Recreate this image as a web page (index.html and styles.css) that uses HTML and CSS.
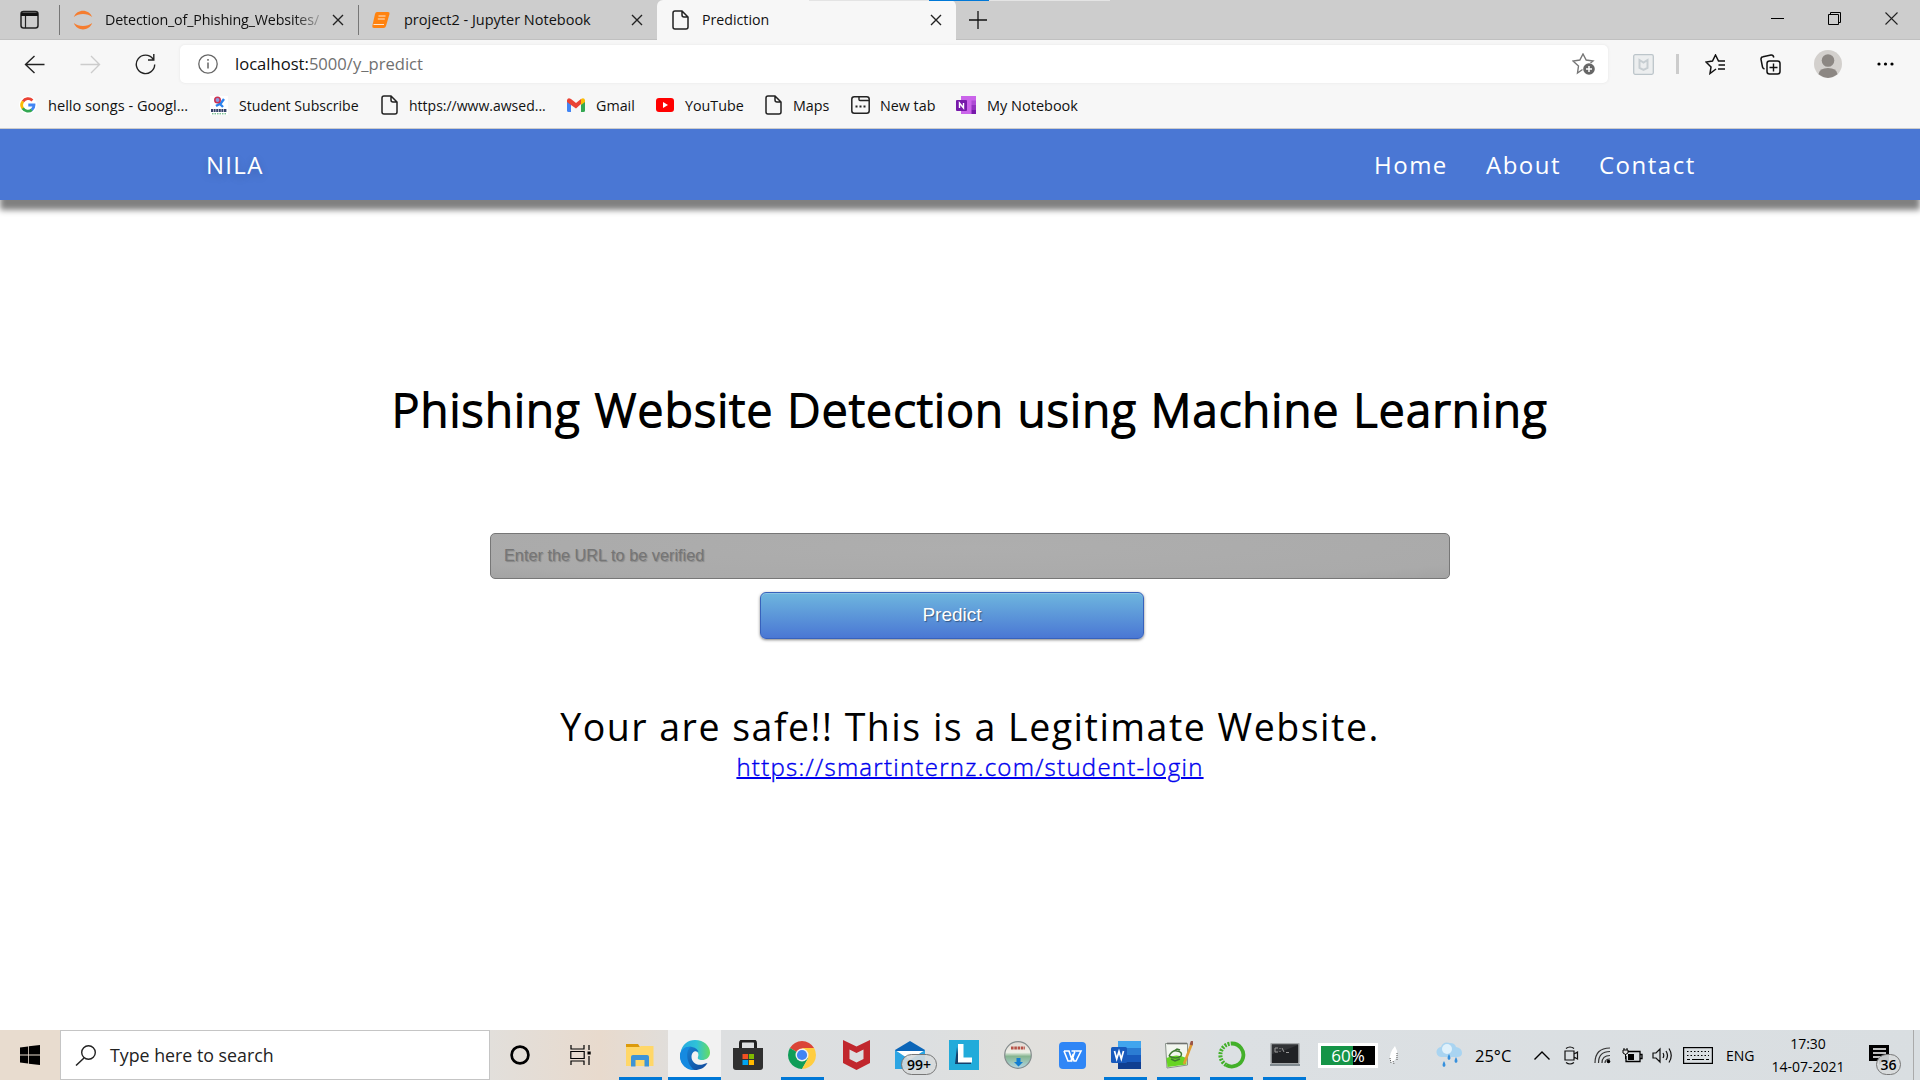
FILE: index.html
```html
<!DOCTYPE html>
<html lang="en">
<head>
<meta charset="utf-8">
<title>Prediction</title>
<link rel="stylesheet" href="styles.css">
</head>
<body>
<svg class="defs" width="0" height="0">
  <symbol id="x" viewBox="0 0 12 12"><path d="M1 1l10 10M11 1L1 11" fill="none" stroke="#222" stroke-width="1.4"/></symbol>
  <symbol id="page" viewBox="0 0 17 20"><path d="M3 1h7l6 6v10q0 2-2 2H3q-2 0-2-2V3q0-2 2-2zM10 1v4q0 2 2 2h4" fill="none" stroke="#222" stroke-width="1.5"/></symbol>
</svg>
<div class="tabs">
  <div class="tabmenu"><svg width="19" height="19" viewBox="0 0 19 19"><rect x="1" y="1.5" width="17" height="16.5" rx="2.500" fill="none" stroke="#222" stroke-width="1.500"/><path d="M1 2.500h17V6H1z" fill="#111"/><path d="M5.500 6v12" stroke="#222" stroke-width="1.200"/></svg></div>
  <div class="tab tab-one">
    <svg width="20" height="20" viewBox="0 0 20 20"><path d="M.8 7C4-1.500 16-1.500 19.200 7C14.500 3 5.500 3 .8 7zM.8 13C4 21.500 16 21.500 19.200 13C14.500 17 5.500 17 .8 13z" fill="#f57d30"/></svg>
    <span class="t t-det">Detection_of_Phishing_Websites/</span>
    <svg class="close" width="12" height="12"><use href="#x"/></svg>
  </div>
  <div class="tab tab-two">
    <svg width="18" height="16" viewBox="0 0 18 16"><path d="M5 0h11q2 0 1.500 2L14 14q-.5 2-2.500 2H2q-2 0-1.700-2L3 2q.5-2 2-2z" fill="#ff8310"/><path d="M6.500 4h7M5.800 7h7M1.500 12.500h10.500" stroke="#fff" stroke-width="1.100" opacity=".8"/></svg>
    <span class="t t-proj">project2 - Jupyter Notebook</span>
    <svg class="close" width="12" height="12"><use href="#x"/></svg>
  </div>
  <div class="tab active">
    <svg width="17" height="20"><use href="#page"/></svg>
    <span class="t t-pred">Prediction</span>
    <svg class="close" width="12" height="12"><use href="#x"/></svg>
  </div>
  <svg class="plus" width="18" height="18" viewBox="0 0 18 18"><path d="M9 0v18M0 9h18" stroke="#111" stroke-width="1.300"/></svg>
  <div class="winctl">
    <svg width="13" height="13" viewBox="0 0 13 13"><path d="M0 6.500h13" stroke="#000"/></svg>
    <svg width="13" height="13" viewBox="0 0 13 13"><path d="M.5 2.500h10v10H.5zM2.500 2.500v-2h10v10h-2" fill="none" stroke="#000"/></svg>
    <svg width="13" height="13" viewBox="0 0 13 13"><path d="M.5.5l12 12M12.500.5l-12 12" stroke="#222" stroke-width="1.100"/></svg>
  </div>
  <div class="sharebar"><i></i></div>
</div>
<div class="toolbar">
  <svg class="back" width="21" height="19" viewBox="0 0 21 19"><path d="M20.500 9.500H1.500M10.500 1L1.500 9.500L10.500 18" fill="none" stroke="#222" stroke-width="1.400"/></svg>
  <svg class="fwd" width="21" height="19" viewBox="0 0 21 19"><path d="M.5 9.500h19M11 1l8.500 8.500L11 18" fill="none" stroke="#ccc" stroke-width="1.400"/></svg>
  <svg class="reload" width="21" height="21" viewBox="0 0 21 21"><path d="M18 5A9.200 9.200 0 1 0 19.700 10.500M18.800 0v6H13" fill="none" stroke="#222" stroke-width="1.400"/></svg>
  <div class="address">
    <svg width="20" height="20" viewBox="0 0 20 20"><circle cx="10" cy="10" r="9.200" fill="none" stroke="#666" stroke-width="1.300"/><path d="M10 8.500v6M10 5v1.800" stroke="#666" stroke-width="1.500"/></svg>
    <span class="url">localhost:<em>5000/y_predict</em></span>
    <svg class="fav" width="24" height="22" viewBox="0 0 24 22"><path d="M10.500 16.500l-5 3.500L6.500 13 1 8l6.800-1L11 1l3.200 6 6.800 1-2.500 2" fill="none" stroke="#777" stroke-width="1.400"/><circle cx="17" cy="16" r="5.800" fill="#666"/><path d="M17 13v6M14 16h6" stroke="#fff" stroke-width="1.500"/></svg>
  </div>
  <svg class="mcs" width="21" height="21" viewBox="0 0 21 21"><rect x=".7" y=".7" width="19.600" height="19.600" rx="1.500" fill="#eceeef" stroke="#bcc5ca" stroke-width="1.300"/><path d="M6.500 6l4 2.500L14.500 6v8l-4 2-4-2z" fill="none" stroke="#c7ced2" stroke-width="2"/></svg>
  <i class="sep"></i>
  <svg class="favs" width="21" height="21" viewBox="0 0 21 21"><path d="M11 15l-6 4.500L6 13 1 8l6.500-1L10.500 1l3 6H20M13.500 11H20M13 15h7" fill="none" stroke="#111" stroke-width="1.500"/></svg>
  <svg class="coll" width="21" height="21" viewBox="0 0 21 21"><path d="M4.500 15Q2.800 14.500 2.500 13L1 5.500Q.8 3 3 2.700L11 1q2.300-.3 2.800 2.500" fill="none" stroke="#111" stroke-width="1.500"/><rect x="7" y="7" width="13" height="13" rx="2.500" fill="none" stroke="#111" stroke-width="1.500"/><path d="M13.500 9.500v8M9.500 13.500h8" stroke="#111" stroke-width="1.400"/></svg>
  <svg class="avatar" width="28" height="28" viewBox="0 0 28 28"><circle cx="14" cy="14" r="14" fill="#d3d0cd"/><circle cx="14" cy="10.500" r="6.300" fill="#8c8783"/><path d="M4.500 24.300Q5.500 18 14 18t9.500 6.300Q14 31.500 4.500 24.300z" fill="#8c8783"/></svg>
  <svg class="dots" width="17" height="4" viewBox="0 0 17 4"><circle cx="2" cy="2" r="1.600"/><circle cx="8.500" cy="2" r="1.600"/><circle cx="15" cy="2" r="1.600"/></svg>
</div>
<div class="bookmarks">
  <div class="bm b1"><svg width="18" height="18" viewBox="0 0 18 18"><circle cx="9" cy="9" r="9" fill="#fff"/><g fill="none" stroke-width="2.800"><path d="M4 5.500A6 6 0 0 1 13.400 4.500" stroke="#ea4335"/><path d="M4 5.300A6 6 0 0 0 4 12.600" stroke="#fbbc05"/><path d="M3.800 12.300A6 6 0 0 0 13 13.600" stroke="#34a853"/><path d="M12.800 13.800A6 6 0 0 0 15 9H9.300" stroke="#4285f4"/></g></svg><span class="t t-hello">hello songs - Googl...</span></div>
  <div class="bm b2"><svg width="18" height="19" viewBox="0 0 18 19"><path d="M0 0h18v19H0z" fill="#fff"/><path d="M6 10l5-3 3-4M10 8l3 3" stroke="#2b82ed" stroke-width="2.400" fill="none"/><circle cx="7.500" cy="4" r="2.700" fill="#8d9be0" stroke="#cc3352" stroke-width="1.600"/><path d="M1 14.500h16" stroke="#344069" stroke-width="3" stroke-dasharray="2 .6"/><path d="M2 17.800h14" stroke="#45a569" stroke-dasharray="1.500 1"/></svg><span class="t t-stud">Student Subscribe</span></div>
  <div class="bm b3"><svg width="17" height="20"><use href="#page"/></svg><span class="t t-aws">https://www.awsed...</span></div>
  <div class="bm b4"><svg width="18" height="14" viewBox="0 0 18 14"><path d="M0 2h4v12H1.500Q0 14 0 12.500z" fill="#4285f4"/><path d="M14 2h4v10.500q0 1.500-1.500 1.500H14z" fill="#34a853"/><path d="M0 2q1-3 4-1l5 4 5-4v5L9 10.500 4 7 0 4z" fill="#ea4335"/><path d="M14 1q3-2 4 1v2l-4 3z" fill="#fbbc04"/></svg><span class="t t-gm">Gmail</span></div>
  <div class="bm b5"><svg width="18" height="14" viewBox="0 0 18 14"><rect width="18" height="14" rx="3" fill="#f00"/><path d="M7 4l5 3-5 3z" fill="#fff"/></svg><span class="t t-yt">YouTube</span></div>
  <div class="bm b6"><svg width="17" height="20"><use href="#page"/></svg><span class="t t-map">Maps</span></div>
  <div class="bm b7"><svg width="19" height="18" viewBox="0 0 19 18"><rect x=".8" y=".8" width="17.400" height="16.400" rx="2.500" fill="none" stroke="#222" stroke-width="1.500"/><path d="M8 1v2.500q0 1 1 1h9" fill="none" stroke="#222" stroke-width="1.400"/><path d="M4.500 10.500h2M8.500 10.500h2M12.500 10.500h2" stroke="#222" stroke-width="2"/></svg><span class="t t-nt">New tab</span></div>
  <div class="bm b8"><svg width="20" height="18" viewBox="0 0 20 18"><path d="M5 0h15v18H5z" fill="#ca64ea"/><path d="M15.500 4.500H20V9h-4.500z" fill="#ae4bd5"/><path d="M15.500 9H20v4.500h-4.500z" fill="#9332bf"/><path d="M15.500 13.500H20V18h-4.500z" fill="#7719aa"/><rect y="4" width="11" height="11" rx="1" fill="#7719aa"/><path d="M3.500 12V7l4 5V7" fill="none" stroke="#fff" stroke-width="1.400"/></svg><span class="t t-my">My Notebook</span></div>
</div>
<header class="nav">
  <span class="brand t">NILA</span>
  <nav><a class="t t-home">Home</a><a class="t t-about">About</a><a class="t t-contact">Contact</a></nav>
</header>
<main>
  <h1><span class="t t-h1">Phishing Website Detection using Machine Learning</span></h1>
  <form>
    <div class="field"><span class="t t-ph">Enter the URL to be verified</span></div>
    <div class="btn"><span class="t t-btn">Predict</span></div>
  </form>
  <p class="msg"><span class="t t-msg">Your are safe!! This is a Legitimate Website.</span></p>
  <p class="link"><a class="t t-link">https://smartinternz.com/student-login</a></p>
</main>
<footer class="taskbar">
  <div class="start"><svg width="20" height="20" viewBox="0 0 20 20"><path d="M0 2.500L8 1.400V9.500H0zM8.800 1.300L20 0V9.500H8.800zM0 10.400h8v8.200L0 17.500zM8.800 10.400H20V20L8.800 18.700z"/></svg></div>
  <div class="search"><svg width="22" height="21" viewBox="0 0 22 21"><circle cx="13.500" cy="7.500" r="6.800" fill="none" stroke="#222" stroke-width="1.400"/><path d="M9 13L1 20.500" stroke="#222" stroke-width="1.500"/></svg><span class="t t-search">Type here to search</span></div>
  <div class="app wide"><svg width="20" height="20" viewBox="0 0 20 20"><circle cx="10" cy="10" r="8.400" fill="none" stroke="#000" stroke-width="2.700"/></svg></div>
  <div class="app wide"><svg width="21" height="20" viewBox="0 0 21 20"><path d="M1 0v4h13V0M.8 6.500h13.400v7H.8zM1 20v-4h13v4M19 0v5M19 11v9" fill="none" stroke="#000" stroke-width="1.200"/><path d="M17.500 6.500h3.200v3h-3.200z"/></svg></div>
  <div class="app explorer run"><svg width="28" height="24" viewBox="0 0 28 24"><path d="M0 1h12l2 3H0z" fill="#dc9a0c"/><path d="M0 4h13l2-1h12.500v20H0z" fill="#ffd768"/><path d="M5 23.500V14q0-2 2-2h14q2 0 2 2v9.500h-4.500V17h-9v6.500z" fill="#3d94d6"/></svg></div>
  <div class="app edge run"><svg width="30" height="30" viewBox="0 0 30 30"><defs><linearGradient id="eg"><stop offset="0" stop-color="#27a9e1"/><stop offset=".55" stop-color="#2fc2d8"/><stop offset="1" stop-color="#66dc61"/></linearGradient><linearGradient id="eb" x2="1" y2="1"><stop stop-color="#1888d8"/><stop offset="1" stop-color="#12489a"/></linearGradient></defs><path d="M.5 13C2 4 8 0 15 0c9 0 15 6 15 12.500 0 5-4 7.500-8 7.500-3 0-5-1-4-3 1.500-4-1-6.500-5-6.500C7 10.500 3 14 .5 17z" fill="url(#eg)"/><path d="M0 15c1-5 6-9 12-8 4 .8 6 3 6.500 5-3-2-7-.5-7 5 0 5 5 9 11 7.500 2-.5 4-1.500 5-1.500C24.500 28 20 30 15 30 7 30 0 24 0 15z" fill="url(#eb)"/><path d="M0 15C1 9 6 6 11 7 6 9 5 22 14 30 6 30-.5 24 0 15z" fill="#168ae0"/></svg></div>
  <div class="app store"><svg width="30" height="30" viewBox="0 0 30 30"><path d="M7.500 10V3q0-2 2-2h11q2 0 2 2v7" fill="none" stroke="#222" stroke-width="3"/><path d="M0 8h30v19q0 3-3 3H3q-3 0-3-3z" fill="#303030"/><path d="M9.500 14H15v5H9.500z" fill="#f25022"/><path d="M15.800 14H21v5h-5.200z" fill="#7fba00"/><path d="M9.500 20H15v5H9.500z" fill="#00a4ef"/><path d="M15.800 20H21v5h-5.200z" fill="#ffb900"/></svg></div>
  <div class="app chrome run"><svg width="28" height="28" viewBox="0 0 28 28"><path d="M14 14L1.900 7A14 14 0 0 1 26.100 7z" fill="#db4437"/><path d="M14 14L1.900 7A14 14 0 0 0 14 28l6-10.500z" fill="#0f9d58"/><path d="M14 7h12.100A14 14 0 0 1 14 28l6-10.500z" fill="#ffcd40"/><circle cx="14" cy="14" r="6.500" fill="#f1f1f1"/><circle cx="14" cy="14" r="5.100" fill="#4285f4"/></svg></div>
  <div class="app"><svg width="27" height="30" viewBox="0 0 27 30"><path d="M0 0l13.500 6.500L27 0v23l-13.500 7L0 23zM6.500 9.500v9.500l7 3.500 7-3.500V9.500l-7 3.500z" fill="#c1272d" fill-rule="evenodd"/></svg></div>
  <div class="app mail"><svg width="30" height="28" viewBox="0 0 30 28"><path d="M0 9L15 0l15 9v4H0z" fill="#0b65b8"/><path d="M0 10h30L15 18z" fill="#fff"/><path d="M0 9l15 10L30 9v19H0z" fill="#2ca5e3"/></svg><b class="badge b99"><span>99+</span></b></div>
  <div class="app"><svg width="30" height="30" viewBox="0 0 30 30"><path d="M0 0h30v30H0z" fill="#22abda"/><path d="M8 7L6 24h16v-2H10z" fill="#15406c"/><path d="M9 4h5.500v13.500H23v5H9z" fill="#fff"/></svg></div>
  <div class="app"><svg width="28" height="28" viewBox="0 0 28 28"><defs><linearGradient id="dg" x2="0" y2="1"><stop stop-color="#e2d8d2"/><stop offset=".4" stop-color="#eef0e8"/><stop offset=".55" stop-color="#86b590"/><stop offset="1" stop-color="#b3d6e5"/></linearGradient></defs><circle cx="14" cy="14" r="13.300" fill="url(#dg)" stroke="#858d8e" stroke-width="1.200"/><path d="M7 7h14" stroke="#b65348" stroke-width="3" stroke-dasharray="2.600 .7"/><path d="M12.500 17h4v4h2.500l-4.500 4.500L10 21h2.500z" fill="#127dd1"/></svg></div>
  <div class="app"><svg width="27" height="27" viewBox="0 0 27 27"><rect width="27" height="27" rx="4" fill="#2f86f6"/><path d="M5 9h5l3 9 3-9h-3.500M5 9l4 10h3l1.500-5L15 19h2l5-10h-5" fill="none" stroke="#fff" stroke-width="1.600"/></svg></div>
  <div class="app word run"><svg width="30" height="28" viewBox="0 0 30 28"><path d="M7 0h23v7H7z" fill="#41a5ee"/><path d="M7 7h23v7H7z" fill="#2b7cd3"/><path d="M7 14h23v7H7z" fill="#185abd"/><path d="M7 21h23v7H7z" fill="#103f91"/><rect y="6" width="16" height="16" rx="1.500" fill="#185abd"/><path d="M3.500 10l2.200 8L8 10.500l2.300 7.500 2.200-8" fill="none" stroke="#fff" stroke-width="1.700"/></svg></div>
  <div class="app npp run"><svg width="28" height="28" viewBox="0 0 28 28"><path d="M.5 2.500h22V24L2 27z" fill="#f2f6ef" stroke="#89928a"/><path d="M1.500 17q10-5 20 0v6.500L2.500 26z" fill="#67d423"/><path d="M2.500 2.500h19" stroke="#555" stroke-width="2" stroke-dasharray="1 1"/><path d="M4 15q3-6 8-5 6 1 4 5-5 4-12 0M9 10l3-2 3 1M6 18l4 2 5-2" fill="none" stroke="#3f7a30" stroke-width="1.500"/><path d="M27 2L19 23" stroke="#e19d31" stroke-width="2.600"/><path d="M27.500 0l-1.500 4" stroke="#9a5548" stroke-width="3"/></svg></div>
  <div class="app ana run"><svg width="28" height="28" viewBox="0 0 28 28"><path d="M14 2.500A11.500 11.500 0 1 1 8.200 24" fill="none" stroke="#43b02a" stroke-width="3.800"/><path d="M8.200 24A11.500 11.500 0 0 1 14 2.500" fill="none" stroke="#43b02a" stroke-width="4" stroke-dasharray="2 1.200"/></svg></div>
  <div class="app cmd run"><svg width="30" height="24" viewBox="0 0 30 24"><rect x="1" y=".5" width="28" height="20" rx="1" fill="#323437" stroke="#a4a8aa" stroke-width="1.500"/><path d="M0 21h30v2H0z" fill="#818b91"/><path d="M2 11Q15 8 28 2v18H2z" fill="#202225"/><path d="M8 5H5v4h3M10 5v1M10 8v1M12 5l2 4M16 9.500h3" fill="none" stroke="#999"/></svg></div>
  <div class="batt"><span class="t">60%</span></div>
  <svg class="feather" width="10" height="20" viewBox="0 0 10 20"><path d="M6 1Q0 8 1 15l2 3q6-5 5-12z" fill="#fff"/><path d="M1 13l1 5M8 8v8M4 16l1 3" stroke="#555" stroke-dasharray="1 1"/></svg>
  <svg class="weather" width="27" height="26" viewBox="0 0 27 26"><path d="M6 15a5 5 0 0 1-1-10Q7-1 14 1q5 0 6 4 6 1 6 6 0 4-5 4z" fill="#a9d4f1"/><circle cx="11" cy="7" r="5" fill="#e0f1fb"/><path d="M13 12q-3 5 0 6 3-1 0-6zM20 15q-3 5 0 6 3-1 0-6zM8 19q-3 5 0 6 3-1 0-6z" fill="#3690dd"/></svg>
  <span class="t t-temp">25°C</span>
  <svg class="tr chev" width="16" height="9" viewBox="0 0 16 9"><path d="M.5 8.500L8 1l7.500 7.500" fill="none" stroke="#000" stroke-width="1.400"/></svg>
  <svg class="tr meet" width="15" height="19" viewBox="0 0 15 19"><path d="M1 5h9v9H1zM10 8l3.500-2v7L10 11M2 2.500Q6-.5 10 2.500M2 16.500Q6 19.500 10 16.500" fill="none" stroke="#111" stroke-width="1.200"/></svg>
  <svg class="tr wifi" width="17" height="17" viewBox="0 0 17 17"><path d="M1 16Q1 1 16 1M4.500 16Q4.500 4.500 16 4.500M8 16Q8 8.500 16 8.500M11 16Q11 12 16 12" fill="none" stroke="#333" stroke-width="1.200"/><circle cx="14.500" cy="14.500" r="1.800"/></svg>
  <svg class="tr bat" width="21" height="15" viewBox="0 0 21 15"><path d="M5 3.500h13v10H4V8M18 6.500h2v4h-2" fill="none" stroke="#000" stroke-width="1.300"/><path d="M6 6h6v6H6z"/><path d="M1 2h5v3Q3.500 8 1 5zM2 0v2M5 0v2M3.500 6v5" fill="#ddd" stroke="#000"/></svg>
  <svg class="tr vol" width="21" height="17" viewBox="0 0 21 17"><path d="M1 6h3l4-4v13l-4-4H1zM11 6q1.500 2.500 0 5M14 4q3 4.500 0 9M17 1.500q4.500 7 0 14" fill="none" stroke="#111" stroke-width="1.200"/></svg>
  <svg class="tr kb" width="30" height="17" viewBox="0 0 30 17"><rect x=".6" y=".6" width="28.800" height="15.800" fill="none" stroke="#000" stroke-width="1.200"/><path d="M4 4.500h22M4 8.500h22" stroke="#000" stroke-width="1.200" stroke-dasharray="1.500 2"/><path d="M4 12.500h3M9 12.500h12M23 12.500h3" stroke="#000" stroke-width="1.200"/></svg>
  <span class="t t-eng">ENG</span>
  <div class="clock"><span class="t t-time">17:30</span><span class="t t-date">14-07-2021</span></div>
  <div class="note"><svg width="20" height="20" viewBox="0 0 20 20"><path d="M0 0h20v16h-6l-4 4v-4H0z"/><path d="M4 4h13M4 8h13M4 12h8" stroke="#fff" stroke-width="1.300"/></svg><b class="badge b36"><span>36</span></b></div>
</footer>
</body>
</html>
```
FILE: styles.css
```css
*{box-sizing:border-box}
body{margin:0;width:1920px;height:1080px;overflow:hidden;background:#fff;font-family:"Open Sans","Noto Sans",sans-serif;color:#111;display:flex;flex-direction:column}
svg{display:block;flex:none}
.defs{position:absolute}
.t{white-space:nowrap;display:inline-block}
p,h1{margin:0}

/* browser tabs */
.tabs{height:40px;background:#cdcdcd;display:flex;align-items:center;font-size:14.5px;border-bottom:1px solid #c0c0c0;position:relative;flex:none}
.tabmenu{width:60px;padding-left:20px;height:30px;display:flex;align-items:center;border-right:1px solid #777}
.tab{display:flex;align-items:center;height:30px}
.tab .close{margin-left:auto}
.tab-one{width:299px;padding:0 14px 0 13px;border-right:1px solid #777}
.tab-one .t{margin-left:12px;font-size:14.3px;letter-spacing:-.16px;-webkit-mask-image:linear-gradient(90deg,#000 88%,rgba(0,0,0,.25))}
.tab-two{width:298px;padding:0 14px 0 13px}
.tab-two .t{margin-left:14px}
.active{width:299px;height:40px;background:#f7f7f7;border-radius:6px 6px 0 0;padding:0 14px 1px 15px;align-self:flex-start}
.active .t{margin-left:13px;font-size:14.2px}
.plus{margin-left:13px}
.winctl{margin-left:auto;display:flex;gap:44px;margin-right:22px;padding-bottom:2px}
.sharebar{position:absolute;left:809px;top:0;width:301px;height:1px;background:#e4e4e4}
.sharebar i{display:block;margin-left:120px;width:60px;height:1px;background:#0078d7}

/* address row */
.toolbar{height:48px;background:#f7f7f7;display:flex;align-items:center;flex:none}
.back{margin-left:24px}
.fwd{margin-left:35px}
.reload{margin-left:34px}
.address{margin-left:24px;width:1428px;height:38px;background:#fff;border-radius:5px;box-shadow:0 0 3px #e5e5e5;display:flex;align-items:center;padding-left:18px}
.url{font-size:16.6px;margin-left:17px;white-space:nowrap;padding-bottom:2px}
.url em{font-style:normal;color:#707070}
.fav{margin-left:auto;margin-right:12px}
.mcs{margin-left:25px}
.sep{width:3px;height:20px;background:#ccc;margin-left:22px}
.favs{margin-left:26px}
.coll{margin-left:34px}
.avatar{margin-left:33px}
.dots{margin-left:35px}

/* bookmarks */
.bookmarks{height:41px;background:#f7f7f7;border-bottom:1px solid #ccc;display:flex;align-items:center;font-size:14.3px;padding:0 0 6px 19px;flex:none}
.bm{display:flex;align-items:center;flex:none}
.b1{width:191px;gap:11px;font-size:14.6px}
.b2{width:171px;gap:11px;font-size:14.1px}
.b3{width:186px;gap:11px;font-size:14px}
.b4{width:89px;gap:11px}
.b5{width:109px;gap:11px}
.b6{width:86px;gap:11px}
.b7{width:105px;gap:10px}
.b8{gap:11px;font-size:14.5px}

/* site */
.nav{height:71px;background:#4a77d4;box-shadow:0 10px 6px gray;display:flex;align-items:center;color:#fff;font-size:24px;letter-spacing:1.5px;padding-left:206px;flex:none}
.brand{text-shadow:0 3px 8px rgba(0,0,0,.18);letter-spacing:1.3px}
.nav nav{margin-left:auto;display:flex;width:546px}
.t-home{width:112px}
.t-about{width:113px}
main{flex:1;display:flex;flex-direction:column;align-items:center;padding-left:20px}
h1{font-size:46.4px;line-height:60px;font-weight:300;letter-spacing:1.65px;margin-top:179px;color:#000;-webkit-text-stroke:2.1px #000}
form{width:960px;margin-top:94px;display:flex;flex-direction:column}
.field{height:46px;border:1px solid #777;border-radius:5px;background:radial-gradient(ellipse at 50% 30%,#aeaeae,#aaa 80%,#a3a3a3);display:flex;align-items:center;padding:0 0 2px 13px;font:16.3px "Liberation Sans",sans-serif;color:#757575;text-shadow:1px 1px 1px rgba(0,0,0,.22)}
.btn{width:384px;height:47px;margin:13px 0 0 270px;border:1px solid #3762bc;border-radius:6px;background:linear-gradient(#6eb6de,#4a77d4);box-shadow:inset 0 1px 0 rgba(255,255,255,.2),0 1px 3px rgba(0,0,0,.5);display:flex;align-items:center;justify-content:center;padding-bottom:2px;color:#fff;font:19px "Liberation Sans",sans-serif;text-shadow:1px 1px 1px rgba(0,0,0,.4)}
.msg{font-size:37.5px;font-weight:400;line-height:44px;letter-spacing:1.5px;margin-top:66px;color:#000}
.link{font-size:24px;font-weight:300;line-height:36px;letter-spacing:1.28px;color:#00e;-webkit-text-stroke:.4px #00e}
.link a{text-decoration:underline;text-decoration-thickness:2px}

/* desktop taskbar */
.taskbar{height:50px;flex:none;display:flex;align-items:center;background:linear-gradient(90deg,#e8dccf 0,#e8dccf 60px,#e2dfdb 490px,#e8dacd 600px,#dddfe0 700px,#dcdfe1 920px,#e1e0dd 1020px,#e2e0dc 1120px,#dce0e3 1220px,#d9dee1 100%);color:#000}
.start{width:60px;display:flex;justify-content:center}
.search{width:430px;height:50px;background:#fff;border:1px solid #c5c5c5;display:flex;align-items:center;padding-left:14px;font-size:17.8px;gap:13px;color:#222}
.app{width:54px;height:50px;display:flex;align-items:center;justify-content:center;position:relative;flex:none}
.wide{width:60px}
.explorer{width:56px;margin-left:2px}
.run{background:linear-gradient(#0078d7,#0078d7) center bottom/43px 3px no-repeat}
.edge{width:53px;background:linear-gradient(#0078d7,#0078d7) center bottom/53px 3px no-repeat #f2f2f2}
.word,.npp,.ana,.cmd{width:53px}
.badge{position:absolute;border:1px solid #777;border-radius:11px;background:rgba(215,218,220,.9);height:21px;font:600 14px/19px "Open Sans",sans-serif;text-align:center}
.b99{left:18px;top:24px;width:36px}
.b36{left:7px;top:24px;width:25px}
.batt{margin-left:7px;width:60px;height:25px;border:3px solid #fff;background:linear-gradient(90deg,#159447 60%,#000 60%);color:#fff;font-size:17px;display:flex;align-items:center;justify-content:center}
.feather{margin-left:11px}
.weather{margin-left:37px}
.t-temp{font-size:16.5px;margin-left:12px;width:38px}
.chev{margin-left:21px}
.meet{margin-left:14px}
.wifi{margin-left:15px}
.bat{margin-left:11px}
.vol{margin-left:9px}
.kb{margin-left:10px}
.t-eng{font-size:14px;margin-left:13px;width:29px}
.clock{width:76px;margin-left:15px;display:flex;flex-direction:column;align-items:center;font-size:14px;line-height:23px}
.note{margin-left:23px;width:45px;height:50px;border-right:1px solid #aaa;display:flex;align-items:center;position:relative}
```
